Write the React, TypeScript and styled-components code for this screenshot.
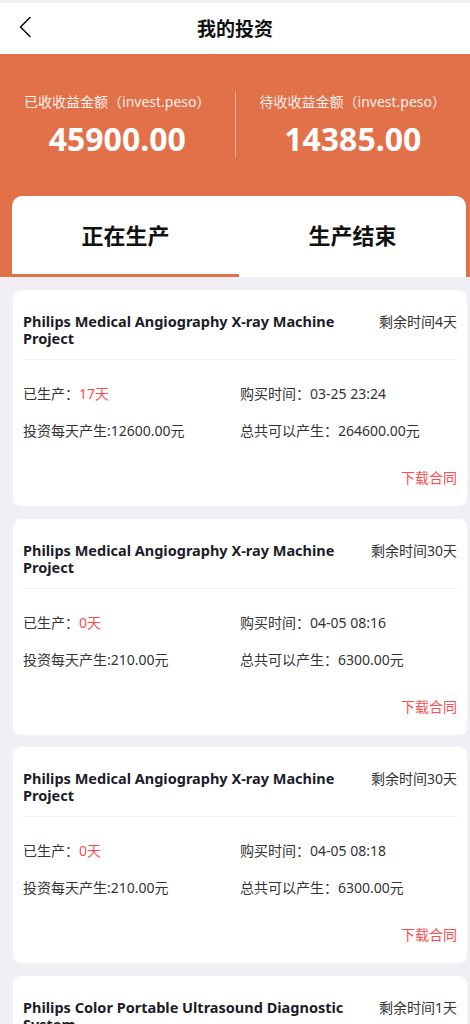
import React, { FC } from "react";
import styled, { createGlobalStyle } from "styled-components";

const GlobalStyle = createGlobalStyle`
  html, body {
    margin: 0;
    padding: 0;
    background: #efeff5;
    font-family: "Noto Sans", "Noto Sans CJK SC", sans-serif;
    color: #333;
  }
  * { box-sizing: border-box; }
`;

interface IOrder {
  title: string;
  remain: string;
  produced: string;
  buyTime: string;
  daily: string;
  total: string;
}

const orders: IOrder[] = [
  {
    title: "Philips Medical Angiography X-ray Machine Project",
    remain: "剩余时间4天",
    produced: "17天",
    buyTime: "03-25 23:24",
    daily: "12600.00元",
    total: "264600.00元",
  },
  {
    title: "Philips Medical Angiography X-ray Machine Project",
    remain: "剩余时间30天",
    produced: "0天",
    buyTime: "04-05 08:16",
    daily: "210.00元",
    total: "6300.00元",
  },
  {
    title: "Philips Medical Angiography X-ray Machine Project",
    remain: "剩余时间30天",
    produced: "0天",
    buyTime: "04-05 08:18",
    daily: "210.00元",
    total: "6300.00元",
  },
  {
    title: "Philips Color Portable Ultrasound Diagnostic System",
    remain: "剩余时间1天",
    produced: "29天",
    buyTime: "03-12 10:05",
    daily: "500.00元",
    total: "15000.00元",
  },
];

const Page = styled.div`
  width: 470px;
  min-height: 1024px;
  padding-top: 3px;
  background: #efeff5;
  overflow: hidden;
`;

const Header = styled.header`
  position: relative;
  height: 51px;
  background: #fff;
  display: flex;
  align-items: center;
  justify-content: center;
`;

const BackButton = styled.button`
  position: absolute;
  left: 14px;
  top: 10px;
  width: 22px;
  height: 28px;
  padding: 0;
  border: none;
  background: none;
  display: flex;
  align-items: center;
  justify-content: center;
`;

const HeaderTitle = styled.h1`
  margin: 0 0 2px;
  font-size: 19px;
  font-weight: 700;
  color: #111;
`;

const Banner = styled.section`
  background: #e2714a;
`;

const Stats = styled.div`
  display: flex;
  align-items: center;
  padding: 38px 0 39px;
`;

const Stat = styled.div`
  flex: 1;
  display: flex;
  flex-direction: column;
  align-items: center;
  color: #fff;
`;

const StatLabel = styled.div`
  font-size: 14px;
  line-height: 20px;
  color: rgba(255, 255, 255, 0.92);
`;

const StatValue = styled.div`
  margin-top: 9px;
  font-size: 32px;
  line-height: 36px;
  font-weight: 700;
`;

const Divider = styled.div`
  width: 1px;
  height: 65px;
  background: rgba(255, 255, 255, 0.45);
`;

const Tabs = styled.div`
  margin: 0 4px 0 12px;
  height: 81px;
  background: #fff;
  border-radius: 10px 10px 0 0;
  display: flex;
`;

const Tab = styled.div<{ $active?: boolean }>`
  flex: 1;
  display: flex;
  align-items: center;
  justify-content: center;
  padding-bottom: 3px;
  font-size: 22px;
  font-weight: 700;
  color: #111;
  border-bottom: 3px solid ${p => (p.$active ? "#e2714a" : "transparent")};
`;

const List = styled.div`
  display: flex;
  flex-direction: column;
  gap: 12.5px;
  padding: 13px 3px 0 13px;
`;

const Card = styled.div`
  background: #fff;
  border-radius: 8px;
  padding: 23px 10px 18px 10px;
`;

const CardHead = styled.div`
  display: flex;
  justify-content: space-between;
  align-items: flex-start;
  gap: 12px;
  padding-bottom: 12px;
  border-bottom: 1px solid #f2f2f4;
`;

const CardTitle = styled.div`
  flex: 1;
  max-width: 335px;
  font-size: 14.5px;
  line-height: 17px;
  font-weight: 700;
  color: #1c1c28;
`;

const Remain = styled.div`
  font-size: 14px;
  line-height: 17px;
  color: #333;
  white-space: nowrap;
`;

const InfoGrid = styled.div`
  display: grid;
  grid-template-columns: 1fr 1fr;
  row-gap: 17px;
  padding-top: 24px;
`;

const Info = styled.div`
  font-size: 14px;
  line-height: 20px;
  color: #333;
  white-space: nowrap;
`;

const Red = styled.span`
  color: #ff4d4f;
`;

const Footer = styled.div`
  display: flex;
  justify-content: flex-end;
  padding-top: 27px;
`;

const Download = styled.a`
  font-size: 14px;
  line-height: 20px;
  color: #ff4d4f;
  text-decoration: none;
`;

const OrderCard: FC<{ order: IOrder }> = ({ order }) => (
  <Card>
    <CardHead>
      <CardTitle>{order.title}</CardTitle>
      <Remain>{order.remain}</Remain>
    </CardHead>
    <InfoGrid>
      <Info>
        已生产：<Red>{order.produced}</Red>
      </Info>
      <Info>购买时间：{order.buyTime}</Info>
      <Info>投资每天产生:{order.daily}</Info>
      <Info>总共可以产生：{order.total}</Info>
    </InfoGrid>
    <Footer>
      <Download>下载合同</Download>
    </Footer>
  </Card>
);

const App: FC = () => (
  <>
    <GlobalStyle />
    <Page>
      <Header>
        <BackButton>
          <svg width="14" height="22" viewBox="0 0 14 22" fill="none">
            <path d="M12 1.5L2.5 11L12 20.5" stroke="#111" strokeWidth="1.6" strokeLinecap="round" strokeLinejoin="round" />
          </svg>
        </BackButton>
        <HeaderTitle>我的投资</HeaderTitle>
      </Header>
      <Banner>
        <Stats>
          <Stat>
            <StatLabel>已收收益金额（invest.peso）</StatLabel>
            <StatValue>45900.00</StatValue>
          </Stat>
          <Divider />
          <Stat>
            <StatLabel>待收收益金额（invest.peso）</StatLabel>
            <StatValue>14385.00</StatValue>
          </Stat>
        </Stats>
        <Tabs>
          <Tab $active>正在生产</Tab>
          <Tab>生产结束</Tab>
        </Tabs>
      </Banner>
      <List>
        {orders.map((o, i) => (
          <OrderCard key={i} order={o} />
        ))}
      </List>
    </Page>
  </>
);

export default App;
